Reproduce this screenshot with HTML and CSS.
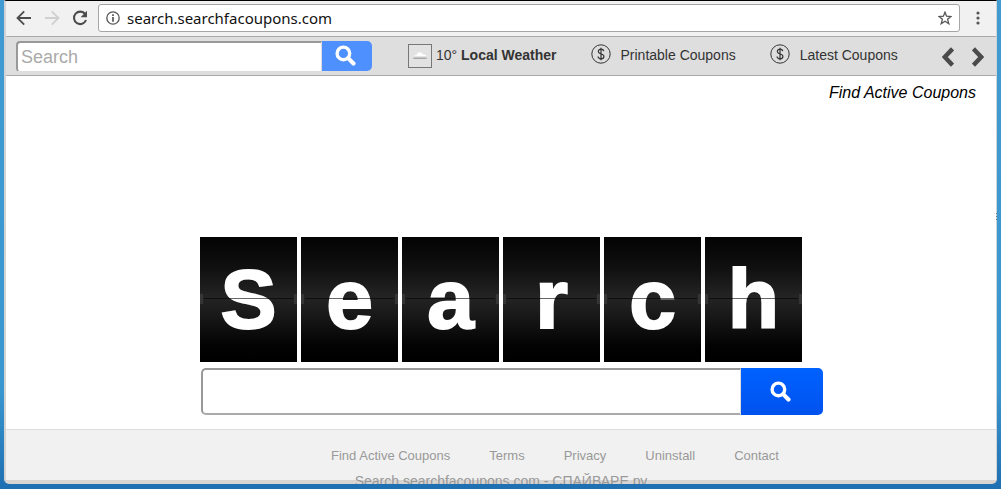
FILE: index.html
```html
<!DOCTYPE html>
<html lang="en">
<head>
<meta charset="utf-8">
<title>Search</title>
<link rel="stylesheet" href="styles.css">
</head>
<body>
<svg class="defs" aria-hidden="true">
  <symbol id="lens" viewBox="0 0 20 20"><circle cx="8" cy="8" r="6" fill="none" stroke="currentColor" stroke-width="3.2"/><path d="M12.5 12.5 17.600 17.600" stroke="currentColor" stroke-width="4" stroke-linecap="round"/></symbol>
  <symbol id="dollar" viewBox="0 0 20 20"><circle cx="10" cy="10" r="9.2" fill="none" stroke="currentColor" stroke-width="1"/><path d="M12.8 7.2C12.5 5.8 11.4 5.2 10 5.2S7.3 6 7.3 7.5C7.3 9.3 8.8 9.6 10.2 10S12.9 11 12.9 12.5 11.5 14.8 10 14.8 7.2 14 7 12.5M10 3.7V16.3" fill="none" stroke="currentColor" stroke-width="1.2"/></symbol>
</svg>
<div class="window">
  <header class="browser-bar">
    <button class="icon-button" aria-label="Back"><svg width="16" height="16" viewBox="0 0 16 16" fill="none" stroke="#4c4c4c" stroke-width="1.8"><path d="M15 8H2M8.2 1.3 1.5 8l6.7 6.7"/></svg></button>
    <button class="icon-button" aria-label="Forward"><svg width="16" height="16" viewBox="0 0 16 16" fill="none" stroke="#d0d0d0" stroke-width="1.8"><path d="M1 8h13M7.8 1.3 14.5 8l-6.7 6.7"/></svg></button>
    <button class="icon-button" aria-label="Reload"><svg width="16" height="16" viewBox="0 0 16 16"><path d="M13.2 4.2A6.2 6.2 0 1 0 14 10" fill="none" stroke="#4c4c4c" stroke-width="2.1"/><path d="M15 .8V7.2H8.6z" fill="#4c4c4c"/></svg></button>
    <div class="address">
      <svg width="14" height="14" viewBox="0 0 14 14"><circle cx="7" cy="7" r="6.2" fill="none" stroke="#555" stroke-width="1.3"/><path d="M7 3.2v1.7M7 6.1v4.7" stroke="#555" stroke-width="1.7"/></svg>
      <input class="address-input" aria-label="Address" value="search.searchfacoupons.com">
      <button class="icon-button" aria-label="Bookmark"><svg width="14" height="14" viewBox="0 0 14 14"><path d="M7 1.2 8.6 5.2 13 5.5 9.6 8.3 10.8 12.7 7 10.2 3.2 12.7 4.4 8.3 1 5.500 5.4 5.2Z" fill="none" stroke="#555" stroke-width="1.3"/></svg></button>
    </div>
    <button class="icon-button" aria-label="Menu"><svg width="4" height="14" viewBox="0 0 4 14" fill="#555"><circle cx="2" cy="2" r="1.6"/><circle cx="2" cy="7" r="1.6"/><circle cx="2" cy="12" r="1.6"/></svg></button>
  </header>

  <div class="toolbar">
    <form class="quick-search">
      <input class="quick-input" aria-label="Quick search" placeholder="Search">
      <button class="quick-button" type="button" aria-label="Search"><svg width="21" height="21"><use href="#lens"/></svg></button>
    </form>
    <nav class="shortcuts">
      <a class="weather" href="#">
        <svg width="24" height="24" viewBox="0 0 24 24"><defs><linearGradient id="cloud" x2="0" y2="1"><stop offset=".5" stop-color="#fff"/><stop offset="1" stop-color="#999"/></linearGradient></defs><rect x=".5" y=".5" width="23" height="23" fill="#e2e2e2" stroke="#777"/><path d="M5 13.5c0-2 2-2.500 3.500-2.300C9 8 13 7 14.500 10.300c2-.4 4 .8 4.500 3.200q0 1.500-2 1.500H7q-2 0-2-1.500z" fill="url(#cloud)"/></svg>
        <span>10° <b>Local Weather</b></span>
      </a>
      <a class="coupon" href="#"><svg width="20" height="20"><use href="#dollar"/></svg><span>Printable Coupons</span></a>
      <a class="coupon" href="#"><svg width="20" height="20"><use href="#dollar"/></svg><span>Latest Coupons</span></a>
    </nav>
    <div class="pager">
      <button class="icon-button" aria-label="Previous"><svg width="12" height="20" viewBox="0 0 12 20"><path d="M9 3.500 2.800 10 9 16.500" fill="none" stroke="#4a4a4a" stroke-width="4.500" stroke-linecap="square"/></svg></button>
      <button class="icon-button" aria-label="Next"><svg width="12" height="20" viewBox="0 0 12 20"><path d="M3 3.500 9.200 10 3 16.500" fill="none" stroke="#4a4a4a" stroke-width="4.500" stroke-linecap="square"/></svg></button>
    </div>
  </div>

  <main class="page">
    <a class="brand" href="#">Find Active Coupons</a>
    <div class="hero">
      <h1 class="tiles">
        <span class="tile">S</span><span class="tile">e</span><span class="tile">a</span><span class="tile">r</span><span class="tile">c</span><span class="tile">h</span>
      </h1>
      <form class="main-search">
        <input class="main-input" aria-label="Search the web">
        <button class="main-button" type="button" aria-label="Search the web"><svg width="21" height="21"><use href="#lens"/></svg></button>
      </form>
    </div>
  </main>

  <footer class="footer">
    <a href="#">Find Active Coupons</a>
    <a href="#">Terms</a>
    <a href="#">Privacy</a>
    <a href="#">Uninstall</a>
    <a href="#">Contact</a>
  </footer>
  <div class="caption">Search.searchfacoupons.com - СПАЙВАРЕ.ру</div>
  <div class="grip"></div>
</div>
</body>
</html>
```
FILE: styles.css
```css
* { box-sizing: border-box; }

body {
  margin: 0;
  min-height: 100vh;
  display: flex;
  flex-direction: column;
  padding: 0 4px 5px;
  background: linear-gradient(#3f9bd2, #3a96cf 80%, #1d6fb2);
  font-family: "Liberation Sans", Arial, sans-serif;
}

a { color: inherit; text-decoration: none; }
button { border: 0; padding: 0; cursor: pointer; }
svg { display: block; flex: none; }
.defs { position: absolute; width: 0; height: 0; }

.window {
  position: relative;
  flex: 1;
  display: flex;
  flex-direction: column;
  border: 2px solid #d3d3d3;
  border-top: 1px solid #000;
  border-right-width: 1px;
  border-bottom: 4px solid #d8d4d1;
  border-radius: 0 0 5px 5px;
  background: #fff;
}

.icon-button { background: none; }

.browser-bar {
  display: flex;
  align-items: center;
  gap: 12px;
  height: 35px;
  padding: 0 16px 2px 10px;
  background: #f1f1f1;
}

.address {
  flex: 1;
  display: flex;
  align-items: center;
  gap: 7px;
  height: 28px;
  margin: 0 4px 0 -2px;
  padding: 0 7px;
  border: 1px solid #a5a5a5;
  border-radius: 3px;
  background: #fff;
}

.address-input {
  flex: 1;
  min-width: 0;
  border: 0;
  padding: 0;
  outline: 0;
  color: #111;
  font: 15px "Noto Sans", sans-serif;
}

.toolbar {
  display: flex;
  height: 40px;
  padding: 4px 12px 4px 10px;
  border: solid #aaa;
  border-width: 1px 0;
  background: #dedede;
  color: #333;
}

.quick-search {
  display: flex;
  width: 356px;
  height: 31px;
}

.quick-input {
  flex: 1;
  min-width: 0;
  padding: 0 3px;
  border: 2px solid #999;
  border-right: 1px solid #ddd;
  border-bottom: 1px solid #ddd;
  border-radius: 4px 0 0 4px;
  background: #fff;
  font: 18px "Liberation Sans", Arial, sans-serif;
}

.quick-input::placeholder { color: #aaa; }

.quick-button {
  display: flex;
  justify-content: center;
  width: 50px;
  height: 30px;
  padding: 4px 4px 0 0;
  border-radius: 0 5px 5px 0;
  background: #4d90fe;
  color: #fff;
}

.shortcuts {
  display: flex;
  gap: 34px;
  margin-left: 36px;
  font-size: 14px;
  line-height: 22px;
  white-space: nowrap;
}

.weather { display: flex; gap: 4px; padding-top: 3px; }
.coupon { display: flex; gap: 10px; padding-top: 3px; }

.pager {
  display: flex;
  align-items: flex-start;
  gap: 18px;
  margin-left: auto;
  padding-top: 6px;
}

.page { flex: 1; }

.brand {
  display: block;
  padding: 7px 20px 0 0;
  color: #000;
  font-size: 16px;
  font-style: italic;
  line-height: 20px;
  text-align: right;
}

.hero {
  width: 602px;
  max-width: 100%;
  margin: 134px auto 0;
}

.tiles {
  display: grid;
  grid-template-columns: repeat(6, 1fr);
  gap: 4px;
  margin: 0 0 6px;
}

.tile {
  position: relative;
  height: 125px;
  background: linear-gradient(#030303, #101010 25%, #242424 48%, #1b1b1b 60%, #101010 72%, #020202 88%, #000);
  color: #fff;
  font-size: 84px;
  font-weight: bold;
  line-height: 125px;
  text-align: center;
  -webkit-text-stroke: 2px #fff;
}

.tile::before {
  content: "";
  position: absolute;
  top: 61px;
  left: 4px;
  right: 4px;
  height: 1px;
  background: rgba(0, 0, 0, .6);
}

.tile::after {
  content: "";
  position: absolute;
  top: 57px;
  left: 0;
  right: 0;
  height: 10px;
  border: solid #353535;
  border-width: 0 3px;
}

.main-search {
  display: flex;
  width: 622px;
  height: 47px;
  margin-left: 1px;
}

.main-input {
  flex: 1;
  min-width: 0;
  padding: 0 10px;
  border: 2px solid #999;
  border-right: 1px solid #ddd;
  border-bottom-color: #aaa;
  border-radius: 5px 0 0 5px;
  background: #fff;
  font: 18px "Liberation Sans", Arial, sans-serif;
}

.main-button {
  display: flex;
  align-items: center;
  justify-content: center;
  width: 82px;
  padding-right: 4px;
  border-radius: 0 5px 5px 0;
  background: linear-gradient(#0062ff, #0052ee);
  color: #fff;
}

.footer {
  display: flex;
  justify-content: center;
  gap: 39px;
  height: 51px;
  padding: 18px 0 0 108px;
  border-top: 1px solid #ddd;
  background: #f1f1f1;
  color: #999;
  font-size: 13px;
  line-height: 16px;
}

.caption {
  position: absolute;
  bottom: -4px;
  left: 0;
  right: 0;
  height: 11px;
  overflow: hidden;
  color: #999;
  font-size: 14px;
  line-height: 16px;
  text-align: center;
}

.grip {
  position: absolute;
  top: 212px;
  right: -1px;
  width: 1px;
  height: 7px;
  background: repeating-linear-gradient(#777 0 1px, transparent 1px 3px);
}
```
